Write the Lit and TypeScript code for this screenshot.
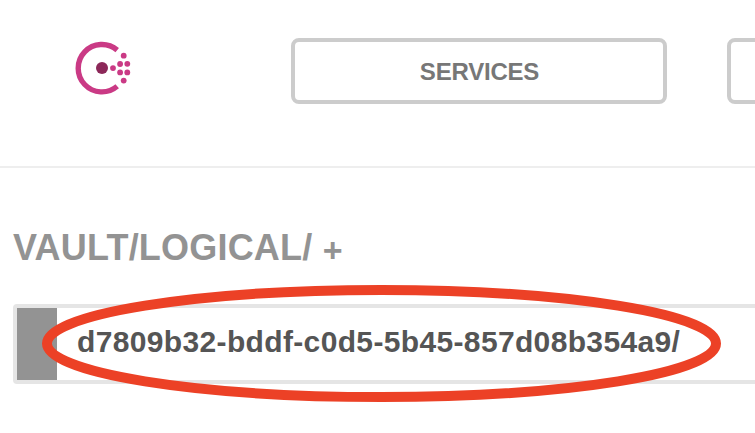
import { LitElement, html, css } from "lit";
import { customElement } from "lit/decorators.js";

@customElement("app-root")
export class AppRoot extends LitElement {
  static styles = css`
    :host {
      display: block;
      position: relative;
      width: 100%;
      height: 100vh;
      overflow: hidden;
      background: #fff;
      font-family: "Liberation Sans", Arial, sans-serif;
      font-weight: 700;
    }
    * { box-sizing: border-box; }
    .bar {
      display: flex;
      align-items: flex-start;
      height: 168px;
      padding: 38px 0 0 74px;
      border-bottom: 2px solid #eee;
    }
    .logo { flex: none; width: 60px; height: 60px; margin-right: 157px; }
    .tab {
      flex: none;
      width: 376px;
      height: 66px;
      margin-right: 60px;
      border: 4px solid #ccc;
      border-radius: 8px;
      background: #fff;
      color: #777;
      font: inherit;
      font-size: 24px;
      line-height: 56px;
      letter-spacing: -0.2px;
      text-align: center;
      padding: 2px 0 0 1px;
    }
    .path {
      margin: 0;
      padding: 60px 0 0 13px;
      height: 136px;
      font-size: 36px;
      line-height: 40px;
      letter-spacing: 0.2px;
      color: #939393;
      white-space: pre;
    }
    .plus {
      font-size: 34px;
      line-height: 1;
      vertical-align: -2px;
    }
    .item {
      display: flex;
      width: 800px;
      height: 80px;
      margin-left: 13px;
      border: 4px solid #e5e5e5;
      border-radius: 4px;
    }
    .swatch { width: 40px; background: #939393; }
    .name {
      padding-left: 20px;
      font-size: 30px;
      line-height: 68px;
      letter-spacing: 0.35px;
      color: #555;
      white-space: nowrap;
    }
    .ring {
      position: absolute;
      left: 42px;
      top: 285px;
      width: 679px;
      height: 117px;
    }
  `;

  render() {
    return html`
      <header class="bar">
        <svg class="logo" viewBox="74 38 60 60">
          <path d="M117.2 50.1A23.7 23.7 0 1 0 117.2 86.3" fill="none" stroke="#ca3a85" stroke-width="5.4" />
          <circle cx="102" cy="68.1" r="6" fill="#8c2859" />
          <g fill="#ca3a85">
            <circle cx="113" cy="68.1" r="2.9" />
            <circle cx="120.1" cy="64" r="2.9" />
            <circle cx="127.3" cy="63.8" r="2.9" />
            <circle cx="120.1" cy="72.4" r="2.9" />
            <circle cx="127.3" cy="72.4" r="2.9" />
            <circle cx="123.7" cy="55.7" r="2.9" />
            <circle cx="123.7" cy="80.6" r="2.9" />
          </g>
        </svg>
        <button class="tab">SERVICES</button>
        <button class="tab"></button>
      </header>
      <h4 class="path">VAULT/LOGICAL/ <span class="plus">+</span></h4>
      <div class="item">
        <div class="swatch"></div>
        <div class="name">d7809b32-bddf-c0d5-5b45-857d08b354a9/</div>
      </div>
      <svg class="ring" viewBox="0 0 679 117">
        <ellipse cx="339.5" cy="58.5" rx="334.5" ry="53.5" fill="none" stroke="#ec4126" stroke-width="10" />
      </svg>
    `;
  }
}
